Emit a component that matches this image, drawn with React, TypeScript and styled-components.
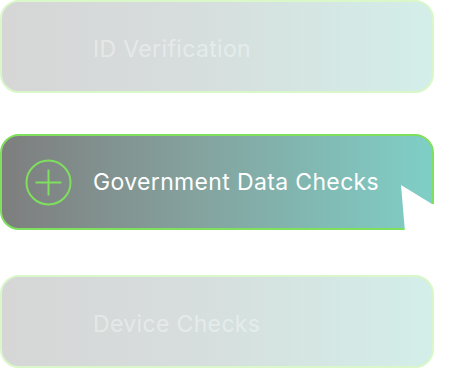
import React from "react";
import styled, { createGlobalStyle } from "styled-components";

const Global = createGlobalStyle`
  html, body { margin: 0; padding: 0; background: #ffffff; }
  body { font-family: Inter, "Noto Sans", "Liberation Sans", sans-serif; }
`;

const List = styled.div`
  display: flex;
  flex-direction: column;
  width: 434px;
`;

const Card = styled.div<{ $active?: boolean; $gap: number; $h: number }>`
  position: relative;
  box-sizing: border-box;
  height: ${(p) => p.$h}px;
  margin-top: ${(p) => p.$gap}px;
  border-radius: 19px;
  border: 2px solid ${(p) => (p.$active ? "#7ee05c" : "#d9f7c9")};
  background: ${(p) =>
    p.$active
      ? "linear-gradient(90deg, #7e7e7e 0%, #84a29e 45%, #7fcfc7 100%)"
      : "linear-gradient(90deg, #d6d6d6 0%, #d6dedd 45%, #d3eee9 100%)"};
  display: flex;
  align-items: center;
  padding-left: 23px;
  gap: 21px;
`;

const IconSlot = styled.div`
  width: 47px;
  height: 47px;
  display: flex;
  align-items: center;
  justify-content: center;
  flex: none;
`;

const Label = styled.span<{ $active?: boolean }>`
  font-size: 23px;
  letter-spacing: 0.35px;
  color: ${(p) => (p.$active ? "#ffffff" : "rgba(255,255,255,0.4)")};
  padding-top: ${(p) => (p.$active ? 0 : 4)}px;
`;

const Spacer = styled.div`
  width: 47px;
  flex: none;
`;

const Cursor = styled.svg`
  position: absolute;
  right: -4px;
  bottom: -4px;
  width: 36px;
  height: 50px;
`;

export default function App() {
  return (
    <>
      <Global />
      <List>
        <Card $gap={0} $h={93}>
          <Spacer />
          <Label>ID Verification</Label>
        </Card>
        <Card $active $gap={41} $h={96}>
          <IconSlot>
            <svg width="47" height="47" viewBox="0 0 47 47" fill="none">
              <circle cx="23.5" cy="23.5" r="22" stroke="#7ee05c" strokeWidth="2" />
              <path d="M23.5 10.5V36.5M10.5 23.5H36.5" stroke="#7ee05c" strokeWidth="2" />
            </svg>
          </IconSlot>
          <Label $active>Government Data Checks</Label>
          <Cursor viewBox="0 0 36 50">
            <polygon points="1,3 32,22 36,22 36,50 5,50" fill="#ffffff" />
          </Cursor>
        </Card>
        <Card $gap={45} $h={93}>
          <Spacer />
          <Label>Device Checks</Label>
        </Card>
      </List>
    </>
  );
}
